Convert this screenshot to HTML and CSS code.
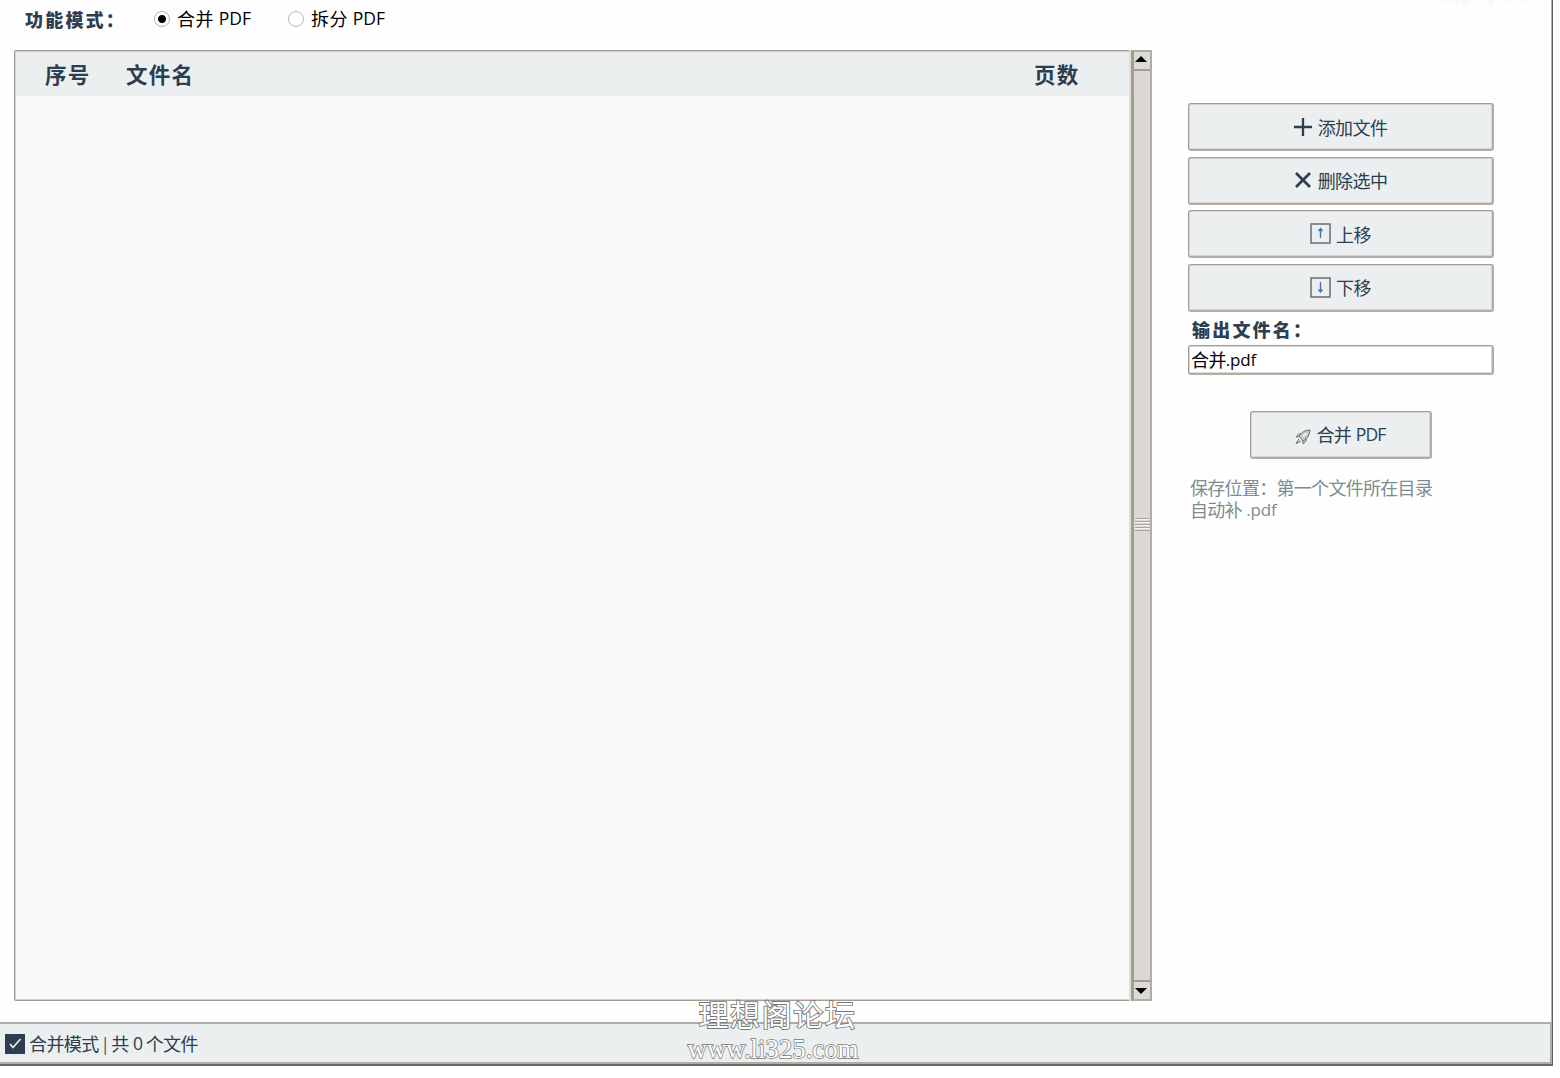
FILE: index.html
```html
<!DOCTYPE html>
<html lang="zh-CN">
<head>
<meta charset="utf-8">
<title>PDF 合并 / 拆分</title>
<link rel="stylesheet" href="styles.css">
</head>
<body>
<div class="window">
  <header class="modes">
    <span class="modes-label">功能模式：</span>
    <label class="mode mode-merge"><span class="radio radio-on"></span><span class="mode-text">合并 <span class="latin">PDF</span></span></label>
    <label class="mode"><span class="radio"></span><span class="mode-text">拆分 <span class="latin">PDF</span></span></label>
  </header>
  <main class="content">
    <section class="list">
      <div class="list-head">
        <span class="col-index">序号</span>
        <span class="col-name">文件名</span>
        <span class="col-pages">页数</span>
      </div>
    </section>
    <div class="scrollbar">
      <div class="arrow"><svg width="12" height="6" viewBox="0 0 12 6"><path d="M0 6 6 0l6 6z"/></svg></div>
      <div class="thumb"><span class="grip"></span></div>
      <div class="arrow"><svg width="12" height="6" viewBox="0 0 12 6"><path d="M0 0h12L6 6z"/></svg></div>
    </div>
    <aside class="side">
      <div class="actions">
        <button class="btn"><svg class="icon-add" width="18" height="18" viewBox="0 0 18 18"><path d="M9 0v18M0 9h18"/></svg><span>添加文件</span></button>
        <button class="btn"><svg class="icon-add icon-delete" width="18" height="18" viewBox="0 0 18 18"><path d="m2 2 14 14M16 2 2 16"/></svg><span>删除选中</span></button>
        <button class="btn btn-move"><svg class="icon-box" width="21" height="21" viewBox="0 0 21 21"><path class="frame" d="M1 1h19v19H1z"/><path class="shaft" d="M10.500 15V6M8.500 8l2-2.500 2 2.500"/></svg><span>上移</span></button>
        <button class="btn btn-move"><svg class="icon-box" width="21" height="21" viewBox="0 0 21 21"><path class="frame" d="M1 1h19v19H1z"/><path class="shaft" d="M10.500 5v9M8.500 12.500l2 2.500 2-2.500"/></svg><span>下移</span></button>
      </div>
      <div class="output-label">输出文件名：</div>
      <div class="field">合并<span class="latin-medium">.pdf</span></div>
      <button class="btn btn-merge"><svg class="icon-rocket" width="16" height="16" viewBox="0 0 16 16"><path class="hull" d="M15 1C10 1 7 3 4 7.500l4.500 4.500C12.500 9 14.500 6 15 1z"/><path class="fin" d="M6 5H3.500L1 8l3.500-.5M11 9.500V12L8 15v-4M4 10l-3 4.500L6 12"/><path class="window-slit" d="m8 7.500 3.500-3.500"/></svg><span>合并 <span class="latin-tight">PDF</span></span></button>
      <p class="note">保存位置：第一个文件所在目录<br>自动补 <span class="latin-medium">.pdf</span></p>
    </aside>
  </main>
  <footer class="status">
    <svg class="check" width="20" height="20" viewBox="0 0 20 20"><path d="M0 0h20v20H0z"/><path class="tick" d="m5 10 3 3.500L15.500 5"/></svg>
    <span>合并模式 <span class="bar">|</span> 共 <span class="latin-tight">0</span> 个文件</span>
  </footer>
  <div class="watermark-top">www.52pojie.cn</div>
  <div class="watermark"><span class="wm-name">理想阁论坛</span><span class="wm-url">www.li325.com</span></div>
</div>
</body>
</html>
```
FILE: styles.css
```css
* { box-sizing: border-box; }
body {
  margin: 0;
  background: #fff;
  font-family: "Noto Sans", "Noto Sans CJK SC", sans-serif;
}
.window {
  position: relative;
  display: flex;
  flex-direction: column;
  width: 1553px;
  height: 1066px;
  overflow: hidden;
  background: #fefefe;
  border-right: 1px solid #5f5f5f;
  border-bottom: 2px solid #686866;
  box-shadow: inset -1px 0 #b5b5b3;
}
.modes {
  display: flex;
  align-items: center;
  height: 50px;
  padding: 0 0 13px 25px;
  color: #000;
}
.modes-label, .output-label {
  font: 900 18px/20px "Noto Sans CJK SC", sans-serif;
  letter-spacing: 2.200px;
  color: #2c3e50;
  white-space: nowrap;
}
.modes-label { width: 129px; }
.mode { display: flex; align-items: center; gap: 7px; }
.mode-merge { width: 134px; }
.radio {
  width: 16px;
  height: 16px;
  border: 1px solid #b5b3ad;
  border-radius: 50%;
  background: #fff;
}
.radio-on { background: radial-gradient(circle, #000 3.500px, #fff 4.500px); }
.mode-text { font: 18px/20px "Noto Sans CJK SC", sans-serif; letter-spacing: .6px; }
.latin, .latin-tight, .latin-medium {
  position: relative;
  top: -1px;
  font-family: "Open Sans", "Noto Sans", sans-serif;
  font-size: 17.500px;
  line-height: 1;
}
.latin { letter-spacing: 0; }
.latin-tight { margin-left: 1px; letter-spacing: -.8px; }
.latin-medium { font-size: 17px; font-weight: 500; letter-spacing: -.2px; }
.content { display: flex; height: 951px; padding-left: 14px; }
.list {
  width: 1117px;
  background: #f9f9f9;
  border: 1px solid #a39e94;
  border-right: 2px solid #e1ded8;
  border-radius: 2px;
  box-shadow: inset 1px 1px #d3d0c9, inset 0 -1px #d3d0c9;
}
.list-head {
  display: flex;
  align-items: center;
  height: 44px;
  margin: 1px 0 0 1px;
  padding-bottom: 1px;
  background: #ebefef;
  color: #2c3e50;
  font: 700 21.500px/30px "Noto Sans CJK SC", sans-serif;
  letter-spacing: 1.200px;
}
.col-index { width: 110px; padding-left: 29px; }
.col-name { flex: 1; }
.col-pages { width: 95px; }
.scrollbar {
  display: flex;
  flex-direction: column;
  width: 21px;
  background: #d9d8d4;
  border: 2px solid #b2ada4;
  border-left: 3px solid #a39e94;
}
.arrow { display: flex; justify-content: center; align-items: center; height: 17px; padding: 0 2px 3px 0; background: #dcdad5; }
.arrow:last-child { padding-bottom: 0; }
.arrow svg { flex: none; fill: #000; }
.thumb {
  display: flex;
  flex: 1;
  justify-content: center;
  align-items: center;
  border: solid #a39e94;
  border-width: 2px 0;
  padding-bottom: 2px;
}
.grip {
  width: 15px;
  height: 13px;
  background: repeating-linear-gradient(#aaa69e 0 1px, #f3f2ef 1px 2px, #d9d8d4 2px 3px);
}
.side { width: 306px; margin-left: 36px; padding-top: 53px; color: #2c3e50; }
.actions { display: flex; flex-direction: column; gap: 5.500px; }
.btn {
  display: flex;
  justify-content: center;
  align-items: center;
  gap: 6px;
  width: 100%;
  height: 48px;
  padding: 0;
  background: #ebefef;
  border: 1px solid #a39e94;
  border-bottom: 2px solid #b2ada4;
  border-right: 2px solid #b2ada4;
  border-radius: 3px;
  box-shadow: inset 0 0 0 1px #d6d4ce;
  color: #2c3e50;
  font: 18px/22px "Noto Sans CJK SC", sans-serif;
  letter-spacing: -.6px;
}
.btn-move { gap: 5px; }
.btn svg { position: relative; }
.icon-add { fill: none; stroke: #2c3e50; stroke-width: 2.300; }
.icon-delete { stroke-width: 2.800; }
.icon-box { fill: none; }
.frame { stroke: #686f75; stroke-width: 1.500; }
.shaft { stroke: #4773a3; stroke-width: 1.400; }
.output-label { height: 33px; padding: 7px 0 0 4px; letter-spacing: 2.200px; }
.field {
  height: 30px;
  padding-left: 2px;
  border: 1px solid #a39e94;
  border-right: 2px solid #b2ada4;
  border-bottom: 2px solid #b2ada4;
  border-radius: 3px;
  box-shadow: inset 0 0 0 1px #d9d7d1;
  background: #fff;
  color: #000;
  font: 18px/27px "Noto Sans CJK SC", sans-serif;
  letter-spacing: -.6px;
}
.btn-merge { width: 182px; margin: 36px auto 0 62px; gap: 5px; }
.btn .icon-rocket { top: 3px; }
.hull { fill: #c9cbc8; stroke: #63686a; }
.fin { fill: none; stroke: #63686a; }
.window-slit { fill: none; stroke: #f4f5f4; stroke-width: 1.500; }
.note {
  margin: 17px 0 0 2px;
  color: #7f8c8d;
  font: 18px/22px "Noto Sans CJK SC", sans-serif;
  letter-spacing: -.7px;
  white-space: nowrap;
}
.note .latin-medium { margin-left: 1px; }
.status {
  display: flex;
  align-items: center;
  gap: 4px;
  height: 42px;
  margin-top: auto;
  padding: 1px 0 0 5px;
  background: #ebefef;
  border: 2px solid #b2ada4;
  border-left: 0;
  color: #2c3e50;
  font: 18px/22px "Noto Sans CJK SC", sans-serif;
  letter-spacing: -.6px;
}
.check { fill: #2c3e50; }
.tick { fill: none; stroke: #e2e9eb; stroke-width: 1.800; }
.bar { position: relative; top: -1px; font-size: 16px; margin: 0 1px; }
.watermark-top {
  position: absolute;
  top: -26px;
  left: 1380px;
  color: #f8f8f8;
  font: 22px/34px "Noto Sans", sans-serif;
  text-shadow: 0 0 3px #e6e9e9;
}
.watermark {
  position: absolute;
  left: 687px;
  top: 995px;
  display: flex;
  flex-direction: column;
  align-items: center;
  width: 172px;
  color: #fff;
  -webkit-text-stroke: 1.800px #777;
  paint-order: stroke fill;
  white-space: nowrap;
}
.wm-name { padding-left: 9px; font: 30px/36px "Noto Sans CJK SC", sans-serif; letter-spacing: 1.600px; }
.wm-url { font: 27px/32px "Liberation Serif", serif; -webkit-text-stroke-width: 1.400px; padding-top: 2px; letter-spacing: -.1px; }
```
